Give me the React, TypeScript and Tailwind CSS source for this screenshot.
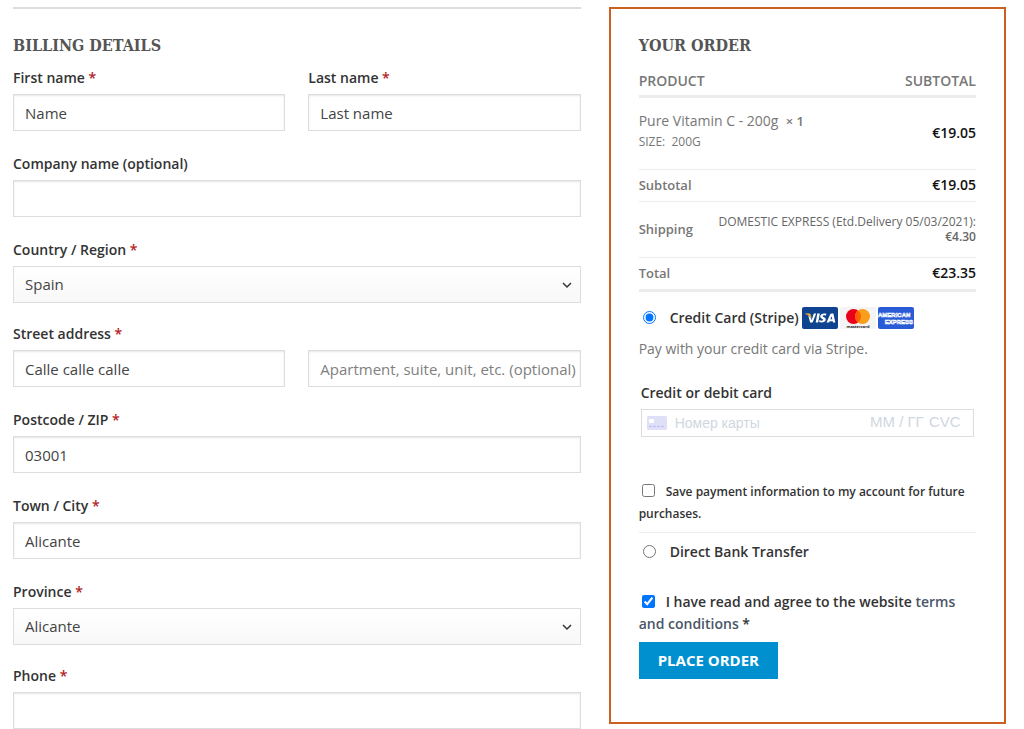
import React from 'react';
import { clsx } from 'clsx';

interface FieldProps {
  id: string;
  label: string;
  required?: boolean;
  className?: string;
  children: React.ReactNode;
}

const inputClass =
  'block h-[37px] w-full border border-[#ddd] bg-white pr-px pl-[11px] text-[15px] text-[#444] shadow-[inset_0_1px_2px_rgba(0,0,0,0.1)] outline-none placeholder:text-[#808080]';

function Field({ id, label, required, className, children }: FieldProps) {
  return (
    <div className={clsx('min-w-0', className)}>
      <label htmlFor={id} className="mb-[5px] block text-sm leading-[22px] font-semibold text-[#333]">
        {label}
        {required && <span className="text-[#b22222]"> *</span>}
      </label>
      {children}
    </div>
  );
}

function SelectBox({ id, options }: { id: string; options: string[] }) {
  return (
    <div className="relative">
      <select
        id={id}
        className="block h-[37px] w-full appearance-none border border-[#ddd] bg-linear-to-b from-white to-[#f8f8f8] px-[11px] text-[15px] text-[#444] outline-none"
      >
        {options.map((option) => (
          <option key={option}>{option}</option>
        ))}
      </select>
      <svg
        className="pointer-events-none absolute top-1/2 right-2 -translate-y-1/2"
        width="12"
        height="8"
        viewBox="0 0 12 8"
        fill="none"
        stroke="#333"
        strokeWidth="1.5"
      >
        <path d="M2 2l4 4 4-4" />
      </svg>
    </div>
  );
}

function VisaLogo() {
  return (
    <svg width="36" height="22" viewBox="0 0 36 22" role="img" aria-label="Visa">
      <rect width="36" height="22" rx="2" fill="#10438f" />
      <path d="M3 6.5h4.2c.8 0 1.2.3 1.4 1l1.2 4.6C8.7 9.6 6.3 7.6 3 6.9z" fill="#f5b335" />
      <path
        d="M14.2 6.5L10.6 15.5H8.1L6.3 8.6c1.3.8 2.5 2 3 3.4l.3 1.2L11.8 6.5zM17.8 6.5L16.2 15.5H13.7L15.3 6.5zM24.3 6.8l-.4 1.9c-1.4-.7-3.3-.5-3.3.3 0 1 3.2 1.2 3.2 3.5 0 2.7-3.8 3.7-6.7 2.6l.4-2c1.6.8 3.7.7 3.7-.3 0-1.1-3-1.2-3-3.4 0-2.7 3.5-3.6 6.1-2.6zM33.3 15.5h-2.3l-.3-1.3H27.7l-.5 1.3h-2.7l3.7-8.2c.2-.5.6-.8 1.2-.8h2zM30.3 12.3l-.7-3-1.2 3z"
        fill="#fff"
      />
    </svg>
  );
}

function MastercardLogo() {
  return (
    <svg width="36" height="22" viewBox="0 0 36 22" role="img" aria-label="Mastercard">
      <rect width="36" height="22" rx="2" fill="#f4f4f4" />
      <circle cx="13.5" cy="9.5" r="7.5" fill="#eb001b" />
      <circle cx="22.5" cy="9.5" r="7.5" fill="#f79e1b" />
      <path d="M18 3.5a7.5 7.5 0 0 1 0 12a7.5 7.5 0 0 1 0-12z" fill="#ff5f00" />
      <text x="18" y="20.5" textAnchor="middle" fontSize="4" fontWeight="700" fill="#222" fontFamily="Open Sans, sans-serif">
        mastercard
      </text>
    </svg>
  );
}

function AmexLogo() {
  return (
    <svg width="36" height="22" viewBox="0 0 36 22" role="img" aria-label="American Express">
      <rect width="36" height="22" rx="2" fill="#2a5bd7" />
      <g fill="#2a5bd7" stroke="#fff" strokeWidth="0.6" fontFamily="Liberation Sans, sans-serif" fontWeight="700" fontSize="6">
        <text x="0" y="10">AMERICAN</text>
        <text x="35" y="17" textAnchor="end">EXPRESS</text>
      </g>
    </svg>
  );
}

function BillingDetails() {
  return (
    <section className="border-t-2 border-[#ddd] pt-[25px]">
      <h2 className="mb-[9px] font-['DejaVu_Serif_Condensed','DejaVu_Serif',serif] text-base leading-6 font-bold text-[#555]">
        BILLING DETAILS
      </h2>
      <div className="grid grid-cols-2 gap-x-[23px]">
        <Field id="first-name" label="First name" required className="mb-[22px]">
          <input id="first-name" type="text" defaultValue="Name" className={inputClass} />
        </Field>
        <Field id="last-name" label="Last name" required className="mb-[22px]">
          <input id="last-name" type="text" defaultValue="Last name" className={inputClass} />
        </Field>
        <Field id="company" label="Company name (optional)" className="col-span-2 mb-[22px]">
          <input id="company" type="text" className={inputClass} />
        </Field>
        <Field id="country" label="Country / Region" required className="col-span-2 mb-5">
          <SelectBox id="country" options={['Spain']} />
        </Field>
        <Field id="street" label="Street address" required className="mb-[22px]">
          <input id="street" type="text" defaultValue="Calle calle calle" className={inputClass} />
        </Field>
        <div className="mb-[22px] flex min-w-0 items-end">
          <input
            type="text"
            aria-label="Apartment, suite, unit, etc."
            placeholder="Apartment, suite, unit, etc. (optional)"
            className={inputClass}
          />
        </div>
        <Field id="postcode" label="Postcode / ZIP" required className="col-span-2 mb-[22px]">
          <input id="postcode" type="text" defaultValue="03001" className={inputClass} />
        </Field>
        <Field id="city" label="Town / City" required className="col-span-2 mb-[22px]">
          <input id="city" type="text" defaultValue="Alicante" className={inputClass} />
        </Field>
        <Field id="province" label="Province" required className="col-span-2 mb-5">
          <SelectBox id="province" options={['Alicante']} />
        </Field>
        <Field id="phone" label="Phone" required className="col-span-2">
          <input id="phone" type="tel" className={inputClass} />
        </Field>
      </div>
    </section>
  );
}

function OrderTable() {
  return (
    <table className="w-full table-fixed border-collapse text-left text-sm text-[#777]">
      <colgroup>
        <col className="w-16" />
        <col />
        <col className="w-20" />
      </colgroup>
      <thead>
        <tr className="h-[29px] border-b-3 border-[#ececec]">
          <th colSpan={2} className="font-semibold">PRODUCT</th>
          <th className="text-right font-semibold">SUBTOTAL</th>
        </tr>
      </thead>
      <tbody>
        <tr className="h-[73px] border-b border-[#ececec]">
          <td colSpan={2} className="pb-1">
            <div className="leading-[22px]">
              Pure Vitamin C - 200g&nbsp; <strong className="text-[13px] font-semibold">× 1</strong>
            </div>
            <div className="text-xs leading-5">SIZE:&nbsp; 200G</div>
          </td>
          <td className="text-right font-semibold text-[#111]">€19.05</td>
        </tr>
        <tr className="h-8 border-b border-[#ececec]">
          <th className="text-[13px] font-semibold">Subtotal</th>
          <td colSpan={2} className="text-right font-semibold text-[#111]">€19.05</td>
        </tr>
        <tr className="h-[56px] border-b border-[#ececec]">
          <th className="text-[13px] font-semibold">Shipping</th>
          <td colSpan={2} className="text-right text-xs leading-[15px] text-[#666]">
            DOMESTIC EXPRESS (Etd.Delivery 05/03/2021):
            <br />
            <span className="font-semibold">€4.30</span>
          </td>
        </tr>
        <tr className="h-[33px] border-b-3 border-[#ececec]">
          <th className="text-[13px] font-semibold">Total</th>
          <td colSpan={2} className="text-right font-semibold text-[#111]">€23.35</td>
        </tr>
      </tbody>
    </table>
  );
}

function CardField() {
  const part = "min-w-0 bg-transparent font-['Liberation_Sans',sans-serif] outline-none placeholder:text-[#cfd7df]";

  return (
    <div className="mx-[2px] flex h-7 items-center border border-[#ddd] pr-2 pl-[5px]">
      <svg width="20" height="14" viewBox="0 0 20 14" className="mr-2 shrink-0">
        <rect width="20" height="14" rx="1.5" fill="#dfe0f8" />
        <rect x="2" y="3" width="5" height="4" rx="1" fill="#fff" />
        <path d="M2 10.5h16" stroke="#b9bcf0" strokeDasharray="3 1" />
      </svg>
      <input id="card-number" type="text" placeholder="Номер карты" className={clsx(part, 'flex-1 text-sm')} />
      <input type="text" aria-label="ММ / ГГ" placeholder="ММ / ГГ" className={clsx(part, 'w-[59px] text-[15px]')} />
      <input type="text" aria-label="CVC" placeholder="CVC" className={clsx(part, 'w-9 text-[15px]')} />
    </div>
  );
}

function YourOrder() {
  return (
    <section className="border-2 border-[#cb6120] px-7 pt-[25px] pb-[43px]">
      <h2 className="mb-[9px] font-['DejaVu_Serif_Condensed','DejaVu_Serif',serif] text-base leading-6 font-bold text-[#555]">
        YOUR ORDER
      </h2>
      <OrderTable />

      <label className="mt-[15px] flex h-[22px] items-center text-sm font-semibold text-[#333]">
        <input type="radio" name="payment" defaultChecked className="mr-[14px] ml-1 size-[13px]" />
        Credit Card (Stripe)
        <span className="ml-[3px] flex gap-[2px]">
          <VisaLogo />
          <MastercardLogo />
          <AmexLogo />
        </span>
      </label>
      <p className="mt-[9px] text-sm leading-[22px] text-[#777]">Pay with your credit card via Stripe.</p>

      <label htmlFor="card-number" className="mx-[2px] mt-[22px] mb-[5px] block text-sm leading-[22px] font-semibold text-[#333]">
        Credit or debit card
      </label>
      <CardField />

      <label className="mt-11 block border-b border-[#ececec] pb-[7px] text-xs leading-[22px] font-semibold text-[#333]">
        <input type="checkbox" className="mr-[11px] ml-[3px] size-[13px] align-[-1px]" />
        Save payment information to my account for future purchases.
      </label>

      <label className="mt-2 flex h-[22px] items-center text-sm font-semibold text-[#333]">
        <input type="radio" name="payment" className="mr-[14px] ml-1 size-[13px]" />
        Direct Bank Transfer
      </label>

      <label className="mt-7 block text-sm leading-[22px] font-semibold text-[#333]">
        <input type="checkbox" defaultChecked className="mr-[11px] ml-[3px] size-[13px] align-[-1px]" />
        I have read and agree to the website{' '}
        <a href="#terms" className="text-[#4a5568]">
          terms and conditions
        </a>{' '}
        *
      </label>
      <button type="submit" className="mt-[7px] h-[37px] bg-[#0090d0] px-[19px] text-[15px] font-bold text-white">
        PLACE ORDER
      </button>
    </section>
  );
}

export default function App() {
  return (
    <form className="grid grid-cols-[minmax(0,10fr)_minmax(0,7fr)] items-start gap-7 bg-white pt-[7px] pr-[18px] pl-[13px] font-['Open_Sans',sans-serif]">
      <BillingDetails />
      <YourOrder />
    </form>
  );
}
